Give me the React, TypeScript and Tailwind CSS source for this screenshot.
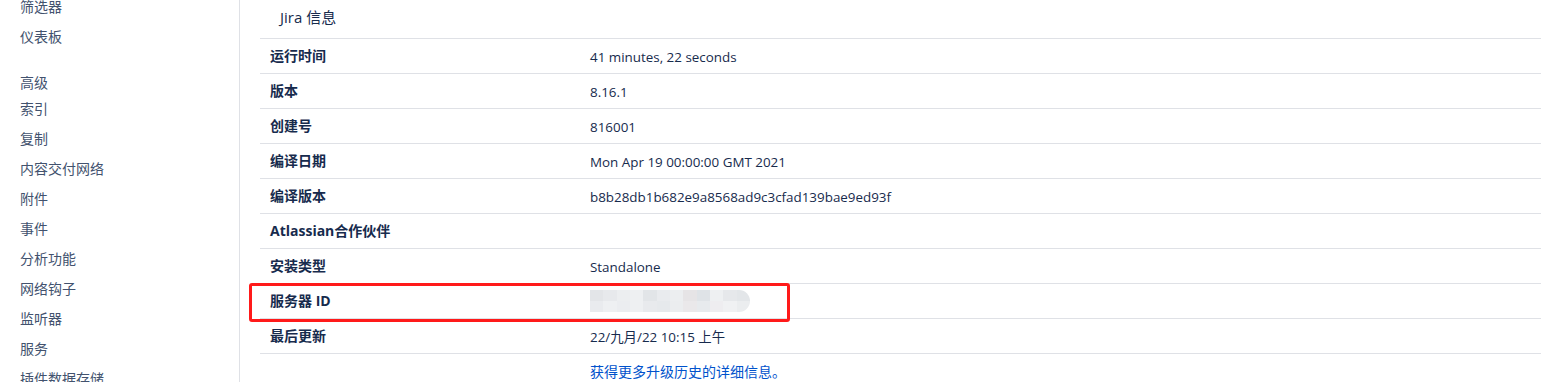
import React from "react";

const navTop = ["筛选器", "仪表板"];
const navAdvanced = [
  "索引",
  "复制",
  "内容交付网络",
  "附件",
  "事件",
  "分析功能",
  "网络钩子",
  "监听器",
  "服务",
  "插件数据存储",
];

const rows: { label: string; value?: string; blur?: boolean }[] = [
  { label: "运行时间", value: "41 minutes, 22 seconds" },
  { label: "版本", value: "8.16.1" },
  { label: "创建号", value: "816001" },
  { label: "编译日期", value: "Mon Apr 19 00:00:00 GMT 2021" },
  { label: "编译版本", value: "b8b28db1b682e9a8568ad9c3cfad139bae9ed93f" },
  { label: "Atlassian合作伙伴" },
  { label: "安装类型", value: "Standalone" },
  { label: "服务器 ID", blur: true },
  { label: "最后更新", value: "22/九月/22 10:15 上午" },
];

const blurTop = ["#e3e5e8", "#e7e9ec", "#eceef0", "#eef0f2", "#e2e5e8", "#e9ebee", "#eceef0", "#e6e4e6", "#dfe3e7", "#eef0f2", "#e6e8eb", "#e3e6e9"];
const blurBottom = ["#e9ebee", "#eef0f2", "#ebedf0", "#eef0f2", "#e8eaed", "#e6e9ec", "#ebedef", "#eae8ea", "#e7eaed", "#eeedf0", "#f0f1f3", "#ebedef"];

const BlurredValue = () => (
  <div className="flex flex-col w-[160px] h-[22px] -mt-[2px] overflow-hidden rounded-r-full">
    <div className="flex h-[11px]">
      {blurTop.map((c, i) => (
        <div key={i} className="flex-1" style={{ backgroundColor: c }} />
      ))}
    </div>
    <div className="flex h-[11px]">
      {blurBottom.map((c, i) => (
        <div key={i} className="flex-1" style={{ backgroundColor: c }} />
      ))}
    </div>
  </div>
);

export default function App() {
  return (
    <div
      className="flex w-[1541px] h-[382px] overflow-hidden bg-white text-[14px] text-[#172b4d]"
      style={{ fontFamily: '"Open Sans", "Noto Sans CJK SC", sans-serif' }}
    >
      <aside className="w-[240px] shrink-0 border-r border-[#dfe1e6] pl-5 -mt-[9px] text-[#42526e]">
        {navTop.map((n) => (
          <div key={n} className="h-[30px] flex items-center">
            {n}
          </div>
        ))}
        <div className="mt-5 h-[22px] flex items-center">高级</div>
        {navAdvanced.map((n) => (
          <div key={n} className="h-[30px] flex items-center">
            {n}
          </div>
        ))}
      </aside>

      <main className="flex-1 pl-5">
        <h2 className="h-[38px] pl-5 pb-[3px] flex items-center text-[15px] font-normal">
          Jira 信息
        </h2>
        <div className="relative border-t border-[#dfe1e6]">
          {rows.map((r) => (
            <div
              key={r.label}
              className="flex h-[35px] pb-[2px] border-b border-[#dfe1e6] items-center"
            >
              <div className="w-[320px] pl-[10px] font-bold">{r.label}</div>
              <div className="pl-[10px] pt-[4px] text-[13.4px]">
                {r.blur ? <BlurredValue /> : r.value}
              </div>
            </div>
          ))}
          <div className="flex h-[35px] items-center">
            <div className="w-[320px]" />
            <a href="#" className="pl-[10px] text-[#0052cc]">
              获得更多升级历史的详细信息。
            </a>
          </div>
          <div className="absolute left-[-11px] top-[244px] w-[541px] h-[39px] border-[3px] border-[#ff1a1a] rounded-[3px] pointer-events-none" />
        </div>
      </main>
    </div>
  );
}
